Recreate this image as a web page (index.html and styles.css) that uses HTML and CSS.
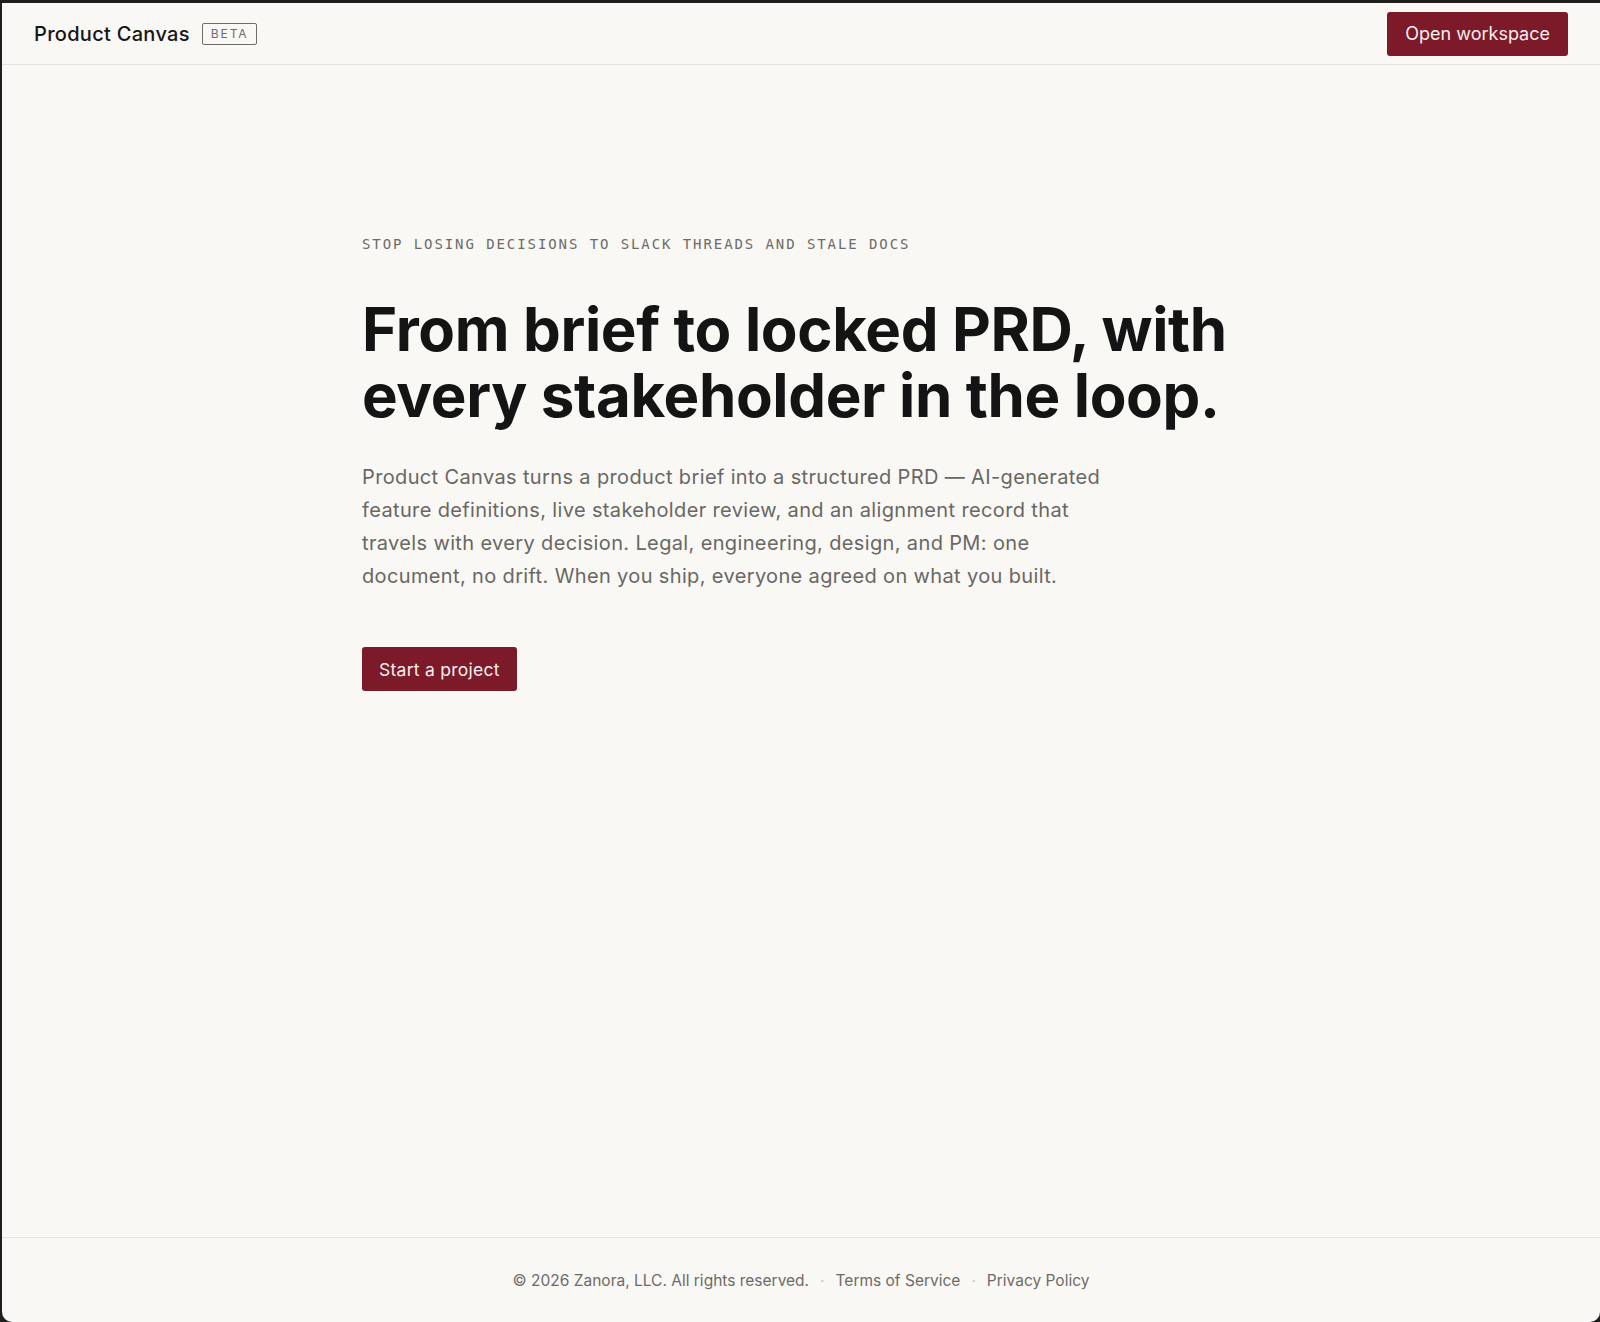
FILE: index.html
```html
<!DOCTYPE html>
<html lang="en">

<head>
    <meta charset="UTF-8">
    <meta name="viewport" content="width=device-width, initial-scale=1.0">
    <title>Product Canvas</title>
    <link rel="stylesheet" href="styles.css">
</head>

<body>
    <div class="window">
        <header class="topbar">
            <div class="brand">
                <span class="brand-name">Product Canvas</span>
                <span class="badge">BETA</span>
            </div>
            <a class="btn" href="#">Open workspace</a>
        </header>

        <main class="hero">
            <div class="hero-inner">
                <p class="eyebrow">Stop losing decisions to Slack threads and stale docs</p>
                <h1 class="headline">From brief to locked PRD, with every stakeholder in the loop.</h1>
                <p class="lede">
                    Product Canvas turns a product brief into a structured PRD — AI-generated
                    feature definitions, live stakeholder review, and an alignment record that
                    travels with every decision. Legal, engineering, design, and PM: one
                    document, no drift. When you ship, everyone agreed on what you built.
                </p>
                <a class="btn btn-small" href="#">Start a project</a>
            </div>
        </main>

        <footer class="footer">
            <span>© 2026 Zanora, LLC. All rights reserved.</span>
            <span class="dot">·</span>
            <a href="#">Terms of Service</a>
            <span class="dot">·</span>
            <a href="#">Privacy Policy</a>
        </footer>
    </div>
</body>

</html>
```

FILE: styles.css
```css
html,
body {
    margin: 0;
    height: 100%;
}

body {
    background: #1e1e1e;
    font-family: Inter, "Noto Sans", sans-serif;
    color: #161616;
}

.window {
    box-sizing: border-box;
    margin: 3px 0 0 2px;
    height: calc(100% - 3px);
    background: #f9f8f5;
    border-radius: 0 0 10px 10px;
    display: flex;
    flex-direction: column;
}

/* top bar */
.topbar {
    height: 61px;
    padding: 0 32px;
    border-bottom: 1px solid #e4e2dd;
    display: flex;
    align-items: center;
    justify-content: space-between;
}

.brand {
    display: flex;
    align-items: center;
    gap: 12px;
}

.brand-name {
    font-size: 20px;
    font-weight: 500;
    letter-spacing: 0.015em;
}

.badge {
    border: 1px solid #6f6d69;
    border-radius: 2px;
    color: #6f6d69;
    font-size: 12px;
    letter-spacing: 0.16em;
    padding: 2px 7px 2px 8px;
    line-height: 16px;
}

.btn {
    display: inline-flex;
    align-items: center;
    height: 44px;
    padding: 0 18px;
    background: #7c1a2a;
    color: #f6eeee;
    font-size: 18px;
    text-decoration: none;
    border-radius: 3px;
}

.btn-small {
    font-size: 17.5px;
    letter-spacing: 0.015em;
    padding: 0 17px;
}

/* hero */
.hero {
    flex: 1;
}

.hero-inner {
    width: 880px;
    margin: 0 auto;
    padding-top: 169px;
    padding-left: 2px;
}

.eyebrow {
    margin: 0 0 42px;
    font-family: "DejaVu Sans Mono", "Liberation Mono", monospace;
    font-size: 14px;
    line-height: 20px;
    letter-spacing: 0.137em;
    text-transform: uppercase;
    color: #6d6b67;
}

.headline {
    margin: 0 0 33px;
    font-size: 60px;
    line-height: 66px;
    font-weight: 700;
    letter-spacing: -0.006em;
    color: #141414;
}

.lede {
    margin: 0 0 54px;
    max-width: 760px;
    font-size: 20px;
    line-height: 33px;
    letter-spacing: 0.018em;
    color: #696763;
}

/* footer */
.footer {
    height: 84px;
    border-top: 1px solid #e4e2dd;
    display: flex;
    align-items: center;
    justify-content: center;
    font-size: 15.5px;
    color: #6d6b67;
}

.footer a {
    color: #6d6b67;
    text-decoration: none;
}

.dot {
    color: #c9c6c0;
    margin: 0 11px;
}
```
